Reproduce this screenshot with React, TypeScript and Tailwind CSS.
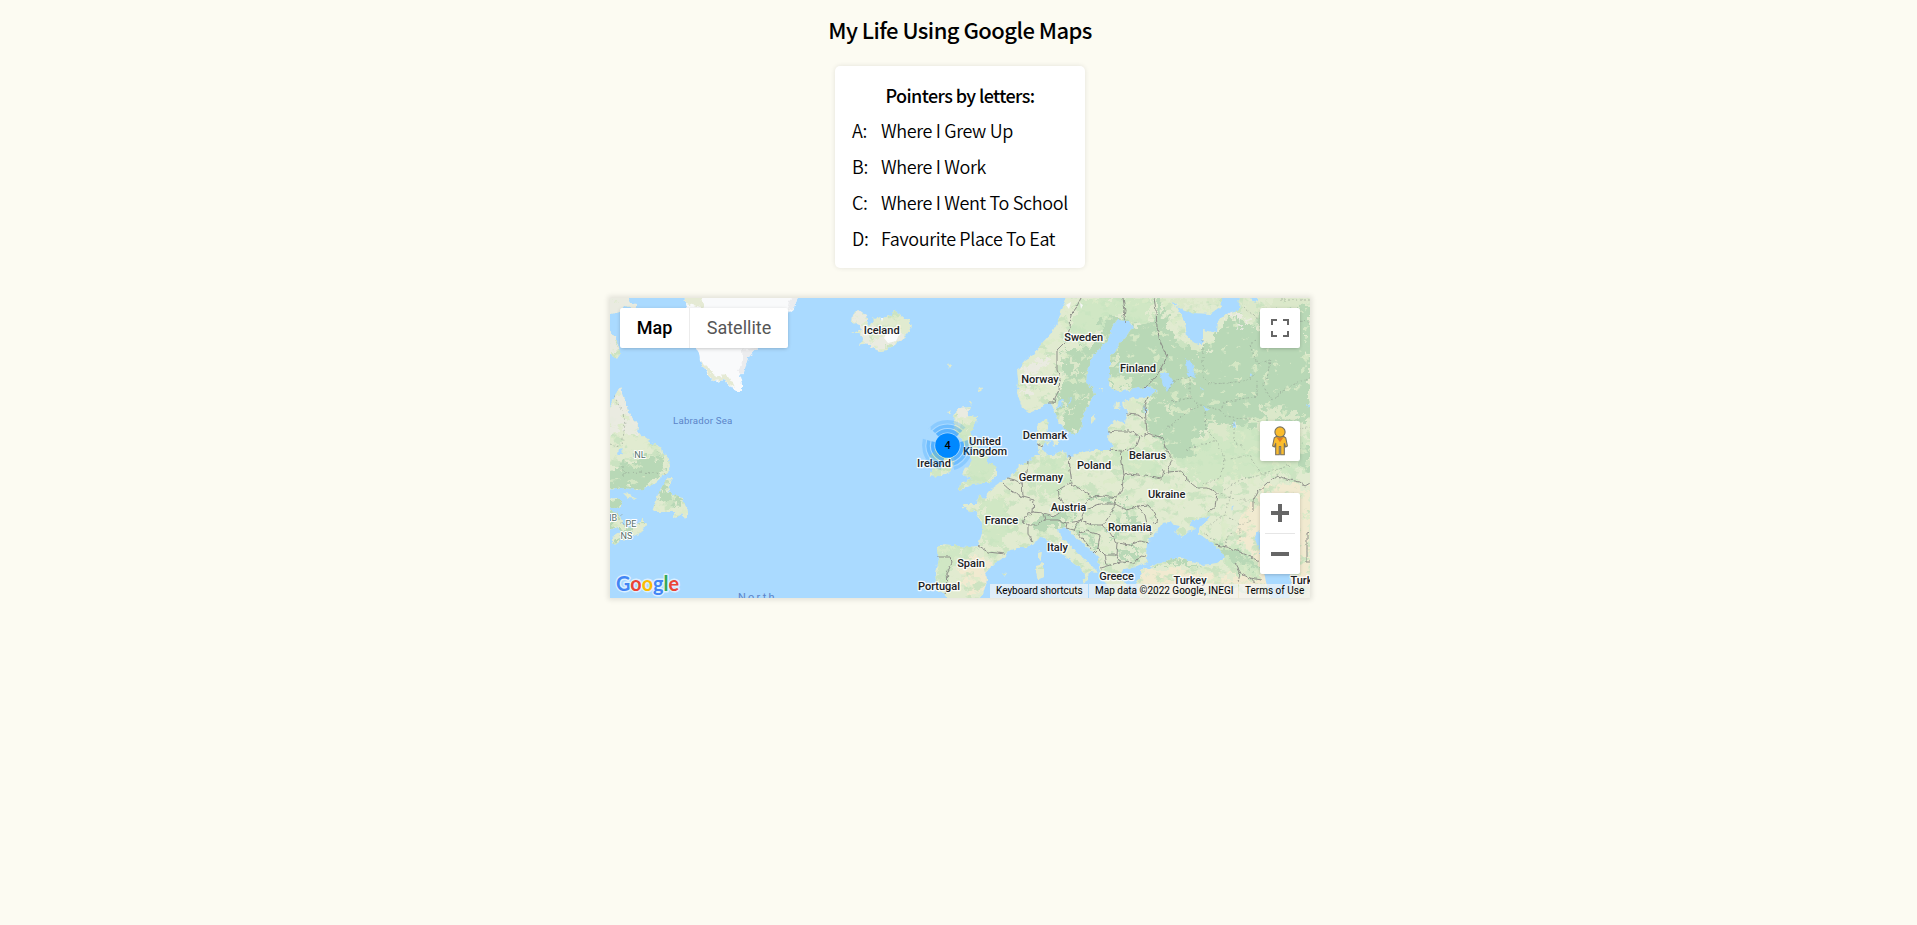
import React from "react";

const pointers: [string, string][] = [
  ["A:", "Where I Grew Up"],
  ["B:", "Where I Work"],
  ["C:", "Where I Went To School"],
  ["D:", "Favourite Place To Eat"],
];

const countries: [string, number, number][] = [
  ["Iceland", 881.7, 334],
  ["Sweden", 1083.7, 341],
  ["Norway", 1040, 383],
  ["Finland", 1138, 372],
  ["Denmark", 1045, 439],
  ["Belarus", 1147.5, 459],
  ["Poland", 1094, 469],
  ["Germany", 1041, 481],
  ["Ukraine", 1166.7, 498],
  ["Austria", 1068.5, 511],
  ["Romania", 1129.7, 531],
  ["France", 1001.5, 524],
  ["Italy", 1057.5, 551],
  ["Spain", 971, 567],
  ["Portugal", 939, 590],
  ["Greece", 1116.5, 580],
  ["Turkey", 1190, 584],
  ["United", 985, 445],
  ["Kingdom", 985, 455],
  ["Ireland", 934, 467],
];

const provinces: [string, number, number][] = [
  ["NL", 640, 458],
  ["NB", 611, 521],
  ["PE", 631, 527],
  ["NS", 626.5, 539],
];

const land = [
  // Canada
  "M606 294H625L630 303 637 304 635 310 626 306 620 312 610 314 606 310Z",
  "M606 328L616 337 618 345 621 353 617 359 612 355 606 350Z",
  "M606 410L612 402 615 395 620 387 623 397 628 410 633 418 638 425 637 432 645 438 652 443 662 448 663 453 669 460 671 465 669 473 663 476 655 483 647 488 637 490 625 488 606 490Z",
  "M668 477L673 477 669 487 668 492 674 495 683 497 684 503 688 510 688 519 684 518 681 513 676 518 673 517 674 512 652 512 655 503 660 490Z",
  "M623 493L630 494 636 499 628 498Z",
  "M606 499L617 498 623 502 620 507 606 509Z",
  "M606 510L617 512 620 518 625 527 632 528 640 522 643 518 643 523 647 523 642 532 632 537 622 540 615 545 612 542 612 537 620 532 617 527 606 532Z",
  // Iceland
  "M852 322L853 315 858 310 862 313 866 315 867 321 869 325 873 323 872 317 875 319 879 317 882 320 888 315 892 316 894 310 900 314 903 318 909 320 912 327 908 333 898 343 887 350 880 351 872 348 867 343 859 345 863 338 860 333 852 333 862 329 860 325Z",
  // British Isles
  "M958 408L970 407 967 416 977 417 976 423 970 432 975 440 980 450 987 455 988 462 997 468 997 475 991 482 980 484 972 485 963 489 957 490 963 482 972 478 965 476 962 473 968 467 972 460 968 455 965 447 962 440 955 430 953 420 957 410Z",
  "M950 443L940 443 935 450 930 455 933 465 930 475 937 477 950 472 955 463 953 453Z",
  "M947 365L952 364 949 368ZM980 387L982 388 981 392 979 391ZM969 402L972 402 971 405ZM949 411L952 409 950 414 948 414Z",
  // Europe
  "M1068 294L1063 307 1060 315 1057 323 1052 332 1043 342 1033 355 1025 360 1017 370 1018 380 1017 393 1022 407 1030 413 1040 409 1048 402 1052 405 1055 413 1058 422 1065 429 1072 434 1079 433 1082 425 1083 413 1090 403 1095 395 1092 387 1086 383 1087 370 1092 358 1100 348 1108 340 1112 327 1117 320 1128 321 1133 328 1128 335 1115 350 1110 358 1110 373 1109 387 1120 392 1133 389 1147 386 1158 390 1150 397 1133 398 1122 402 1123 407 1128 413 1125 423 1117 420 1109 425 1108 440 1115 447 1110 450 1100 450 1092 450 1080 453 1068 457 1063 450 1053 455 1047 455 1043 450 1045 437 1048 427 1047 418 1037 425 1037 433 1038 447 1040 455 1035 455 1028 462 1020 465 1015 472 1008 478 1000 483 993 488 988 493 985 499 978 495 977 504 963 504 963 508 977 513 982 523 982 533 978 546 967 547 943 544 937 548 938 560 935 573 937 592 943 593 950 602 975 602 983 595 987 580 985 573 995 563 1005 557 1006 552 1017 548 1027 548 1033 543 1043 537 1052 543 1060 553 1070 560 1080 567 1085 575 1083 583 1088 580 1090 572 1099 573 1088 562 1077 553 1068 543 1060 537 1058 529 1067 528 1073 535 1082 543 1093 552 1098 557 1099 568 1102 577 1107 587 1110 602H1127L1128 587 1120 577 1123 569 1137 567 1148 562 1146 557 1147 543 1152 537 1157 532 1162 523 1170 522 1175 525 1180 526 1175 532 1183 537 1187 532 1197 529 1188 525 1193 520 1210 516 1205 523 1200 527 1198 533 1212 543 1223 552 1225 558 1217 563 1203 565 1193 562 1180 557 1170 560 1157 564 1140 570 1142 573 1137 583 1140 602H1316V294Z",
  // Islands
  "M1052 439L1058 438 1058 446 1053 445ZM1045 441L1050 442 1048 446ZM1091 418L1095 415 1094 421 1091 424ZM1115 403L1120 402 1119 409 1114 409ZM1100 388L1103 388 1102 391Z",
  "M1038 552L1042 551 1041 560 1038 558ZM1036 565L1043 563 1043 577 1038 580 1036 573ZM1002 573L1007 574 1005 577ZM1063 590L1082 587 1080 596 1068 594Z",
].join("");

const lakes =
  "M1177 307L1193 313 1210 314 1220 307 1223 294H1240L1239 310 1230 312 1218 320 1217 333 1203 330 1203 345 1195 343 1187 337 1185 322ZM1247 294H1259L1255 304ZM1160 373L1168 373 1174 382 1167 392 1163 385ZM1185 358L1192 362 1195 378 1188 375ZM1203 405L1209 410 1206 412ZM1144 405L1147 410 1145 415ZM1173 302L1177 304 1175 307ZM1059 401L1064 399 1062 407 1057 408ZM1069 399L1072 398 1068 407ZM1250 373L1253 377 1250 376ZM1306 404L1310 405 1308 408ZM1258 530L1255 538 1260 552 1266 583 1272 602H1287L1292 587 1290 575 1270 555ZM1144 567L1153 567 1150 570ZM617 453L622 448 623 454 618 456ZM1234 420L1236 427 1233 427ZM1232 506L1234 504 1231 511ZM1200 386L1204 390 1201 391Z";

const forest =
  "M1064 348L1092 348 1105 334 1098 322 1118 317 1135 326 1156 320 1154 298H1164L1166 322 1180 345 1207 349 1222 330 1232 318 1240 322 1256 328 1266 310 1310 304V420L1290 425 1262 420 1248 428 1222 424 1205 430 1190 440 1196 452 1178 458 1166 450 1160 440 1147 430 1145 410 1155 395 1130 388 1108 392V345L1094 400 1078 434 1064 428 1056 405 1062 385ZM606 475L625 462 640 455 668 458 660 473 640 490H606ZM606 498H623V520L606 532ZM625 525L644 522 614 546 612 538ZM662 485L670 478 666 492 682 499 680 505 658 502ZM1040 514L1072 514 1080 519 1066 524 1050 524 1036 532 1030 524ZM1116 499L1128 506 1134 520 1146 524 1134 530 1120 520 1110 528 1112 538 1124 534 1125 528 1131 530 1128 515ZM1085 495L1105 498 1116 500 1112 504 1092 502ZM1072 528L1094 540 1100 550 1092 546ZM1118 550L1140 550 1136 558 1118 560ZM1208 540L1230 549 1258 562 1270 574 1245 564 1225 556ZM1152 565L1175 560 1195 564 1205 568 1180 565ZM1296 466L1310 470V450L1290 444Z";

const clearings =
  "M1110 352L1118 360 1112 366ZM1111 376L1130 380 1132 387 1114 389ZM1186 334L1200 346 1198 358 1190 348ZM1072 358L1082 372 1074 378ZM1080 398L1092 396 1084 402ZM1064 406L1078 404 1070 410ZM1123 402L1140 400 1144 410 1128 412ZM1168 300L1190 298 1200 308 1180 306ZM1205 298H1220L1214 308ZM1208 420L1232 424 1225 438 1208 432ZM1262 408L1300 412 1296 420 1266 418ZM1186 382L1192 380 1188 388ZM1162 404L1170 400 1168 412ZM1250 418L1268 424 1256 430ZM1244 298L1260 310 1256 322 1240 318ZM1262 298H1310V306L1272 310Z";

const softGreen =
  "M1082 298H1150V330L1120 312 1100 330 1080 345 1068 338 1074 312ZM956 432L976 418 997 470 990 484 960 488 970 470ZM932 450L953 445 952 472 930 476ZM982 505L1000 495 1015 520 1005 545 982 545ZM937 545L980 548 960 560 938 592ZM1160 445L1250 425 1310 440V470L1240 478 1200 486 1180 468ZM1100 456L1160 445 1162 476 1126 472ZM1150 396L1190 400 1200 460 1150 436ZM1040 455L1066 458 1068 485 1044 500 1034 480ZM1200 535L1240 545 1265 575 1245 580 1220 556Z";

const dry =
  "M960 566L975 556 990 560 984 576 986 590 970 594 962 582ZM1262 490L1290 484 1310 490V602H1150L1150 575 1190 572 1232 576 1262 570 1240 540 1236 520 1250 505ZM1140 572L1180 568 1200 575 1180 600H1142Z";

const rocky =
  "M606 294H638V312L606 316ZM606 328L622 350 606 360ZM606 412L620 387 638 425 634 438 620 430 606 440ZM852 310H868L872 340 900 330 905 335 880 350H862ZM1026 366L1040 360 1048 354 1050 360 1030 376 1028 398 1024 394ZM957 407H969L966 418 958 424ZM1226 312L1240 310 1248 318 1240 325Z";

const borders =
  "M1081 298L1076 308 1071 315 1070 327 1066 341 1057 350 1057 370 1060 377 1059 390 1055 398 1054 403 1049 403M1123 298L1125 310 1124 318 1126 322M1154 298L1156 310 1157 327 1160 342 1167 357 1157 375 1145 388M1148 397L1145 405 1146 420 1147 433 1163 438 1165 448 1173 458 1167 472 1182 471 1185 478 1197 488 1208 488 1217 493 1215 507 1207 513M1127 414L1137 415 1145 418M1108 432L1117 431 1130 431 1140 437 1147 434M1140 437L1137 445 1130 450 1121 451 1110 450M1121 451L1122 462 1124 475 1130 474 1145 476 1162 479 1164 470M1124 475L1122 488 1117 498 1103 496 1092 497 1082 490 1070 483 1058 490 1060 500 1070 508 1083 505 1092 497M1069 455L1070 470 1072 483M1083 505L1085 509 1100 504 1115 504 1117 498M1115 504L1110 515 1103 525 1092 525 1080 521 1085 509M1115 504L1127 510 1138 506 1145 515 1148 528 1152 535M1138 506L1148 505 1155 513 1158 522 1153 523M1103 525L1110 533 1117 543 1130 545 1140 541 1149 543M1117 543L1116 555 1120 562 1135 563 1140 556 1146 557M1100 568L1110 565 1120 562M1078 533L1087 531 1100 535 1098 548 1093 553M1078 533L1092 550M1098 548L1105 555 1116 555M1105 555L1107 565M1002 483L1010 490 1015 493 1023 497 1034 500 1033 512 1027 515 1023 522 1028 525 1028 533 1032 543M1028 462L1027 472 1022 480 1023 497M1007 478L1015 480 1022 484M1033 512L1043 513 1045 520 1037 525 1028 525M1043 513L1055 516 1066 508M1045 520L1058 520 1067 523 1080 521M1067 523L1066 528 1074 530 1080 521M978 546L988 552 1005 554M937 557L950 557 952 563 947 573 948 585 945 594M1037 444L1043 446M1215 545L1227 547 1240 552 1253 558 1260 562M1253 512L1253 500 1257 492 1267 483 1277 476 1290 480 1300 482 1305 486 1310 483M1235 563L1240 572 1250 578 1262 580M1240 572L1238 582M1307 533V562H1310M1307 533L1310 532M1250 578L1255 584";

const regions =
  "M1203 340V375L1208 384 1228 383 1248 380 1256 374M1256 340L1250 345 1257 364 1270 360 1268 374 1263 386 1272 400 1290 386 1310 378M1167 392L1175 380 1190 377 1190 398 1170 402M1190 398L1200 405 1220 410 1225 402 1257 396 1257 380M1165 430L1190 410 1200 405M1205 412L1206 430 1216 440 1225 460 1250 455 1262 475M1234 420V440L1245 450M1220 410L1224 416 1256 420 1270 430 1310 428M1186 450L1200 446 1216 440M1225 460L1220 478 1202 485M1224 490L1240 480 1262 475 1290 465M1217 493L1236 500 1252 500M1210 525L1225 515 1232 490M1225 515L1240 524 1254 520M1240 524V545M1203 533L1215 540M1224 548L1228 535 1240 530M1244 307L1256 318 1310 322M1280 300H1310M615 396L618 404 623 412 625 425 622 445M610 444L620 448M624 473L640 472 666 474M623 466V476M622 514L621 524 628 526";

const controlBox = "absolute bg-white rounded-[2px] shadow-[0_1px_4px_-1px_rgba(0,0,0,0.3)]";

function MapDrawing() {
  return (
    <svg className="block h-full w-full" viewBox="610 298 700 300">
      <defs>
        <filter id="rough" filterUnits="userSpaceOnUse" x="600" y="288" width="720" height="320" colorInterpolationFilters="sRGB">
          <feTurbulence type="fractalNoise" baseFrequency="0.22" numOctaves="2" seed="4" />
          <feDisplacementMap in="SourceGraphic" scale="5" xChannelSelector="R" yChannelSelector="G" />
        </filter>
        <filter id="ragged" filterUnits="userSpaceOnUse" x="600" y="288" width="720" height="320" colorInterpolationFilters="sRGB">
          <feTurbulence type="fractalNoise" baseFrequency="0.12" numOctaves="3" seed="9" />
          <feDisplacementMap in="SourceGraphic" scale="22" xChannelSelector="R" yChannelSelector="G" />
        </filter>
        <filter id="line" filterUnits="userSpaceOnUse" x="600" y="288" width="720" height="320" colorInterpolationFilters="sRGB">
          <feTurbulence type="fractalNoise" baseFrequency="0.2" numOctaves="2" seed="2" />
          <feDisplacementMap in="SourceGraphic" scale="4" xChannelSelector="R" yChannelSelector="G" />
        </filter>
        <filter id="fields" filterUnits="userSpaceOnUse" x="600" y="288" width="720" height="320" colorInterpolationFilters="sRGB">
          <feTurbulence type="fractalNoise" baseFrequency="0.1 0.13" numOctaves="3" seed="11" />
          <feColorMatrix values="0 0 0 0 0.86  0 0 0 0 0.92  0 0 0 0 0.79  14 0 0 0 -9" />
          <feComposite in2="SourceGraphic" operator="in" />
        </filter>
        <filter id="woods" filterUnits="userSpaceOnUse" x="600" y="288" width="720" height="320" colorInterpolationFilters="sRGB">
          <feTurbulence type="fractalNoise" baseFrequency="0.08 0.12" numOctaves="3" seed="23" />
          <feColorMatrix values="0 0 0 0 0.775  0 0 0 0 0.885  0 0 0 0 0.74  0 10 0 0 -5.6" />
          <feComposite in2="SourceGraphic" operator="in" />
        </filter>
        <clipPath id="landClip"><path d={land} /></clipPath>
      </defs>
      <rect x="610" y="298" width="700" height="300" fill="#aadaff" />
      <g filter="url(#rough)">
        <path d={land} fill="#e1ebd0" />
        <g clipPath="url(#landClip)">
          <path d={dry} fill="#f1ead0" filter="url(#ragged)" />
          <path d={land} filter="url(#woods)" opacity="0.8" />
          <path d={softGreen} fill="#cae6c1" opacity="0.75" filter="url(#ragged)" />
          <path d={forest} fill="#b8d8b6" filter="url(#ragged)" />
          <path d={clearings} fill="#dbe8ca" filter="url(#ragged)" />
          <path d={rocky} fill="#ebebe3" filter="url(#ragged)" opacity="0.9" />
          <path d={land} filter="url(#fields)" opacity="0.8" />
        </g>
        <path
          d="M683 294L686 303 690 320 694 340 696 348 699 353 700 360 704 368 707 374 713 381 718 382 724 380 730 385 733 389 736 391 742 391 742 383 740 377 744 372 746 363 748 358 753 352 757 348 780 330 789 312 794 308 799 294Z"
          fill="#f9fafb"
        />
        <path d="M683 294L686 303 704 308 700 294ZM700 360L704 368 713 381 724 380 735 388 730 378 725 373 720 378 712 372Z" fill="#e5ead4" />
        <path d="M742 350L757 348 748 358 744 372 740 375 738 370 743 362ZM790 300L799 294 794 308 788 310Z" fill="#ebecee" />
        <path d={lakes} fill="#aadaff" />
      </g>
      <path d="M886 334L893 329 900 333 896 341 888 343 884 338ZM881 318L883 318 882 322Z" fill="#fbfcfd" />
      <path d="M1066 305L1071 302 1069 309ZM1080 303L1083 305 1081 309Z" fill="#f6f7f6" />
      <g fill="none" filter="url(#line)">
        <path d={regions} stroke="#8d9a8d" strokeOpacity="0.7" strokeWidth="0.8" strokeDasharray="2 2" />
        <path d={borders} stroke="#8a8a86" strokeWidth="0.95" strokeLinejoin="round" />
      </g>
      <g
        className="font-[Roboto,sans-serif]"
        fill="#202124"
        stroke="#ffffff"
        strokeWidth="2.6"
        strokeOpacity="0.85"
        strokeLinejoin="round"
        paintOrder="stroke"
        fontSize="11"
        fontWeight="500"
        textAnchor="middle"
      >
        {countries.map(([name, x, y]) => (
          <text key={name} x={x} y={y}>{name}</text>
        ))}
        <text x="1290.5" y="584" textAnchor="start">Turk</text>
      </g>
      <g
        className="font-[Roboto,sans-serif]"
        fill="#54706b"
        stroke="#ffffff"
        strokeWidth="2"
        strokeLinejoin="round"
        paintOrder="stroke"
        fontSize="9"
        textAnchor="middle"
      >
        {provinces.map(([name, x, y]) => (
          <text key={name} x={x} y={y}>{name}</text>
        ))}
      </g>
      <g className="font-[Roboto,sans-serif]" fill="#5b84c8">
        <text x="673" y="424" fontSize="9.7" letterSpacing="0.2">Labrador Sea</text>
        <text x="738" y="600.5" fontSize="11" letterSpacing="2.2">North</text>
      </g>
      <g fill="none" stroke="#0088ff" strokeWidth="3.4" transform="rotate(-135 947.5 445.5)">
        <circle cx="947.5" cy="445.5" r="14.8" strokeOpacity="0.5" pathLength="360" strokeDasharray="90 30" />
        <circle cx="947.5" cy="445.5" r="19.3" strokeOpacity="0.35" pathLength="360" strokeDasharray="90 30" />
        <circle cx="947.5" cy="445.5" r="23.8" strokeOpacity="0.18" pathLength="360" strokeDasharray="90 30" />
      </g>
      <circle cx="947.5" cy="445.5" r="12.3" fill="#0088ff" />
      <text
        className="font-[Roboto,sans-serif]"
        x="947.7"
        y="449.2"
        fontSize="11"
        fontWeight="500"
        textAnchor="middle"
      >
        4
      </text>
      <text
        className="font-[Lato,sans-serif]"
        x="616"
        y="590.5"
        fontSize="21.5"
        fontWeight="700"
        textLength="63"
        lengthAdjust="spacingAndGlyphs"
        stroke="#ffffff"
        strokeOpacity="0.6"
        strokeWidth="3"
        strokeLinejoin="round"
        paintOrder="stroke"
      >
        <tspan fill="#4285f4">G</tspan>
        <tspan fill="#ea4335">o</tspan>
        <tspan fill="#fbbc04">o</tspan>
        <tspan fill="#4285f4">g</tspan>
        <tspan fill="#34a853">l</tspan>
        <tspan fill="#ea4335">e</tspan>
      </text>
    </svg>
  );
}

function Pegman() {
  return (
    <svg width="20" height="30" viewBox="0 0 20 30">
      <g fill="#fbbc2c" stroke="#77705f" strokeWidth="1.1" strokeLinejoin="round">
        <path d="M6 10.6H14L15.8 12 17.4 20 15.6 21 14.3 17.4V28.8H10.7V20.5H9.3V28.8H5.7V17.4L4.4 21 2.6 20 4.2 12Z" />
        <circle cx="10" cy="6" r="5.1" />
      </g>
      <path d="M6.2 11L10 16.2 13.8 11Q10 13 6.2 11Z" fill="#e27b26" />
    </svg>
  );
}

export default function App() {
  return (
    <main className="flex min-h-[925px] flex-col items-center bg-[#fcfbf2] pl-[3px] font-['Noto_Sans_CJK_SC','Noto_Sans',sans-serif] text-black">
      <h1 className="mt-[11px] h-9 text-[22px] leading-9 font-medium tracking-[-0.55px] whitespace-nowrap">My Life Using Google Maps</h1>
      <section className="mt-[19px] h-[202px] w-[250px] rounded-[5px] bg-white px-[17px] pt-[11px] text-[18px] shadow-[0_0_5px_rgba(0,0,0,0.1)]">
        <h2 className="text-center leading-9 font-medium tracking-[-0.6px]">Pointers by letters:</h2>
        <ul className="-mt-px">
          {pointers.map(([letter, label]) => (
            <li key={letter} className="flex h-9 leading-9 font-[350] tracking-[-0.36px] whitespace-nowrap">
              <span className="w-[29px] shrink-0">{letter}</span>
              <span className="shrink-0">{label}</span>
            </li>
          ))}
        </ul>
      </section>
      <section className="relative mt-[30px] h-[300px] w-[700px] shadow-[0_0_5px_2px_rgba(0,0,0,0.1)] font-[Roboto,sans-serif]">
        <div className="h-full w-full overflow-hidden">
          <MapDrawing />
        </div>
        <div className={`${controlBox} top-2.5 left-2.5 flex h-10 text-[18px]`}>
          <button className="w-[70px] border-r border-[#ececec] pb-0.5 font-medium text-black">Map</button>
          <button className="w-[98px] pb-0.5 text-[#565656]">Satellite</button>
        </div>
        <button aria-label="Toggle fullscreen" className={`${controlBox} top-2.5 right-2.5 flex size-10 items-center justify-center`}>
          <svg width="18" height="18" viewBox="0 0 18 18" fill="#666">
            <path d="M0 0v6h2V2h4V0zM16 0h-4v2h4v4h2V0zM16 16h-4v2h6v-6h-2zM2 12H0v6h6v-2H2z" />
          </svg>
        </button>
        <button aria-label="Street View" className={`${controlBox} top-[123px] right-2.5 flex size-10 items-center justify-center`}>
          <Pegman />
        </button>
        <div className={`${controlBox} top-[195px] right-2.5 flex w-10 flex-col items-center`}>
          <button aria-label="Zoom in" className="flex size-10 items-center justify-center">
            <svg width="18" height="18" viewBox="0 0 18 18" fill="#666">
              <path d="M18 7h-7V0H7v7H0v4h7v7h4v-7h7z" />
            </svg>
          </button>
          <div className="h-px w-[30px] bg-[#e6e6e6]" />
          <button aria-label="Zoom out" className="flex size-10 items-center justify-center">
            <svg width="18" height="18" viewBox="0 0 18 18" fill="#666">
              <path d="M0 7h18v4H0z" />
            </svg>
          </button>
        </div>
        <div className="absolute right-0 bottom-0 flex h-3.5 gap-px text-[10px] leading-[14px] whitespace-nowrap text-black">
          <span className="w-[98px] bg-[#f5f5f5]/70 px-1.5">Keyboard shortcuts</span>
          <span className="w-[149px] bg-[#f5f5f5]/70 px-1.5">Map data ©2022 Google, INEGI</span>
          <span className="w-[71px] bg-[#f5f5f5]/70 px-1.5">Terms of Use</span>
        </div>
      </section>
    </main>
  );
}
